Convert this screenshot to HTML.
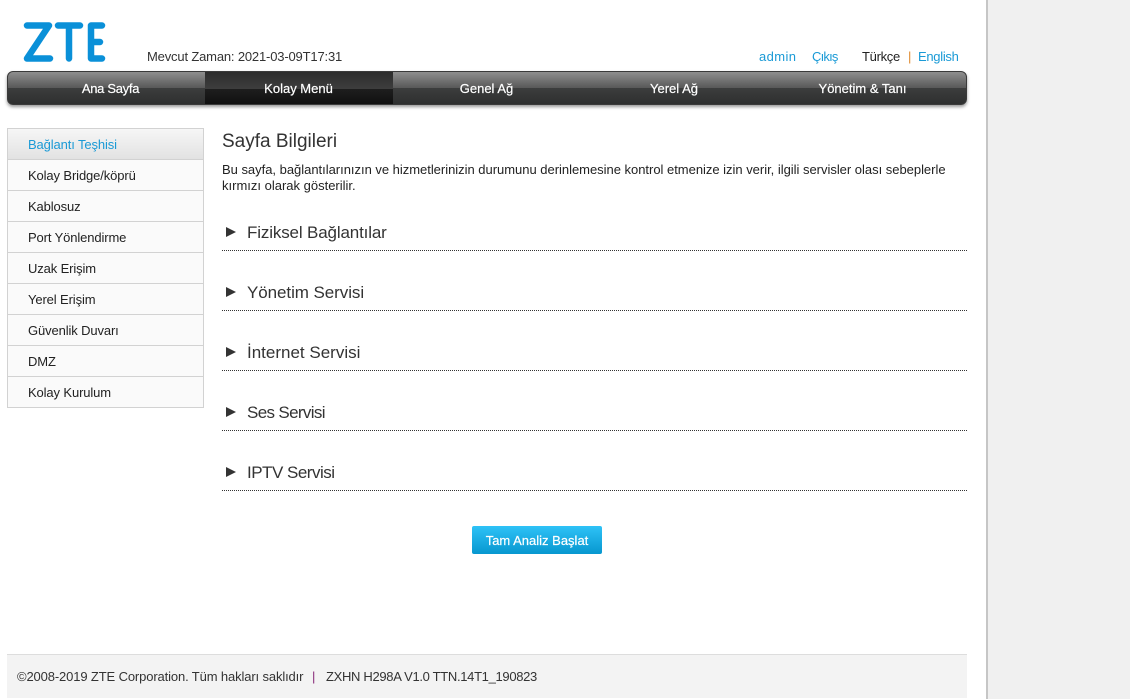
<!DOCTYPE html>
<html lang="tr"><head><meta charset="utf-8"><title>ZTE</title>
<style>
html,body{margin:0;padding:0;width:1130px;height:699px;overflow:hidden;background:#fff}
body{position:relative;font-family:"Liberation Sans","Noto Sans CJK SC",sans-serif;font-size:13px;color:#222}
.a{position:absolute;white-space:nowrap;line-height:16px}
.side{position:absolute;left:986px;top:0;width:144px;height:699px;background:#f0f0f0;border-left:2px solid #c6c6c6;box-sizing:border-box}
.nav{position:absolute;left:7px;top:71px;width:960px;height:34px;border-radius:6px;overflow:hidden;background:linear-gradient(#8e8e8e 0,#585858 50%,#3c3d3d 50%,#2e2f2f 100%);box-shadow:0 2px 3px #999;border:1px solid #3a3a3a;box-sizing:border-box}
.nav .act{position:absolute;left:197px;top:0;width:188px;height:34px;background:linear-gradient(#2c2c2c 0,#3d3d3d 50%,#1e1e1e 50%,#0e0e0e 100%)}
.nt{position:absolute;top:81px;color:#fff;font-weight:400;text-align:center;line-height:16px;white-space:nowrap;font-size:13px;-webkit-text-stroke:.2px #fff}
.menu{position:absolute;left:7px;top:128px;width:197px;height:280px;box-sizing:border-box;border:1px solid #d2d2d2;background:#fafafa}
.menu div{height:31px;box-sizing:border-box;border-bottom:1px solid #d2d2d2;padding-left:20px;line-height:32px;font-size:13px;letter-spacing:-.12px;color:#222;white-space:nowrap}
.menu div:last-child{border-bottom:0}
.menu .on{background:linear-gradient(#f6f6f6,#e2e2e2);color:#1a9ad6}
.sec{position:absolute;left:222px;width:745px;height:30px;border-bottom:1px dotted #333;box-sizing:border-box}
.sec svg{position:absolute;left:4px;top:6px}
.sec span{position:absolute;left:25px;top:1px;font-size:17px;line-height:22px;color:#333;white-space:nowrap}
.btn{position:absolute;left:472px;top:526px;width:130px;height:28px;border-radius:2px;background:linear-gradient(#2ec2f7,#0797cf);color:#fff;text-align:center;line-height:29px;font-size:13px;-webkit-text-stroke:.2px #fff}
.foot{position:absolute;left:7px;top:654px;width:960px;height:44px;background:#f3f3f3;border-top:1px solid #ddd;box-sizing:border-box}
.foot span{position:absolute;top:0;line-height:44px;font-size:13px;color:#333;white-space:nowrap}
</style></head><body>
<svg class="a" style="left:0;top:0" width="120" height="70" viewBox="0 0 120 70"><g fill="none" stroke="#0a90d8" stroke-width="6.500" stroke-linecap="round" stroke-linejoin="round"><path d="M27 25.500H49L27 58.500H50"/><path d="M58 25.500H80M69 25.500V58.500"/><path d="M102 25.500H91V58.500H102M91 42H100"/></g></svg>
<div class="a" style="left:147px;top:49px;color:#333;letter-spacing:-.17px">Mevcut Zaman: 2021-03-09T17:31</div>
<div class="a" style="left:759px;top:49px;color:#1a9ad6;letter-spacing:.4px">admin</div>
<div class="a" style="left:812px;top:49px;color:#1a9ad6;letter-spacing:-.8px">Çıkış</div>
<div class="a" style="left:862px;top:49px;color:#222;letter-spacing:-.3px">Türkçe</div>
<div class="a" style="left:908px;top:49px;color:#e08a30">|</div>
<div class="a" style="left:918px;top:49px;color:#1a9ad6;letter-spacing:-.3px">English</div>
<div class="nav"><div class="act"></div></div>
<div class="nt" style="left:7px;width:207px;letter-spacing:-.3px">Ana Sayfa</div>
<div class="nt" style="left:205px;width:187px">Kolay Menü</div>
<div class="nt" style="left:393px;width:187px">Genel Ağ</div>
<div class="nt" style="left:580px;width:188px">Yerel Ağ</div>
<div class="nt" style="left:768px;width:189px">Yönetim &amp; Tanı</div>
<div class="menu"><div class="on">Bağlantı Teşhisi</div><div>Kolay Bridge/köprü</div><div>Kablosuz</div><div>Port Yönlendirme</div><div>Uzak Erişim</div><div>Yerel Erişim</div><div>Güvenlik Duvarı</div><div>DMZ</div><div>Kolay Kurulum</div></div>
<div class="a" style="left:222px;top:130px;font-size:19px;line-height:24px;color:#333">Sayfa Bilgileri</div>
<div class="a" style="left:222px;top:162px;color:#222;letter-spacing:-.02px">Bu sayfa, bağlantılarınızın ve hizmetlerinizin durumunu derinlemesine kontrol etmenize izin verir, ilgili servisler olası sebeplerle</div>
<div class="a" style="left:222px;top:178px;color:#222">kırmızı olarak gösterilir.</div>
<div class="sec" style="top:221px"><svg width="10" height="10"><path d="M0 0L10 5L0 10Z" fill="#333"/></svg><span style="letter-spacing:-.15px">Fiziksel Bağlantılar</span></div>
<div class="sec" style="top:281px"><svg width="10" height="10"><path d="M0 0L10 5L0 10Z" fill="#333"/></svg><span style="letter-spacing:-.07px">Yönetim Servisi</span></div>
<div class="sec" style="top:341px"><svg width="10" height="10"><path d="M0 0L10 5L0 10Z" fill="#333"/></svg><span>İnternet Servisi</span></div>
<div class="sec" style="top:401px"><svg width="10" height="10"><path d="M0 0L10 5L0 10Z" fill="#333"/></svg><span style="letter-spacing:-.65px">Ses Servisi</span></div>
<div class="sec" style="top:461px"><svg width="10" height="10"><path d="M0 0L10 5L0 10Z" fill="#333"/></svg><span style="letter-spacing:-.5px">IPTV Servisi</span></div>
<div class="btn">Tam Analiz Başlat</div>
<div class="foot"><span style="left:10px;letter-spacing:-.13px">©2008-2019 ZTE Corporation. Tüm hakları saklıdır</span><span style="left:305px;color:#8a2a7a">|</span><span style="left:319px;letter-spacing:-.32px">ZXHN H298A V1.0 TTN.14T1_190823</span></div>
<div class="side"></div>
</body></html>
